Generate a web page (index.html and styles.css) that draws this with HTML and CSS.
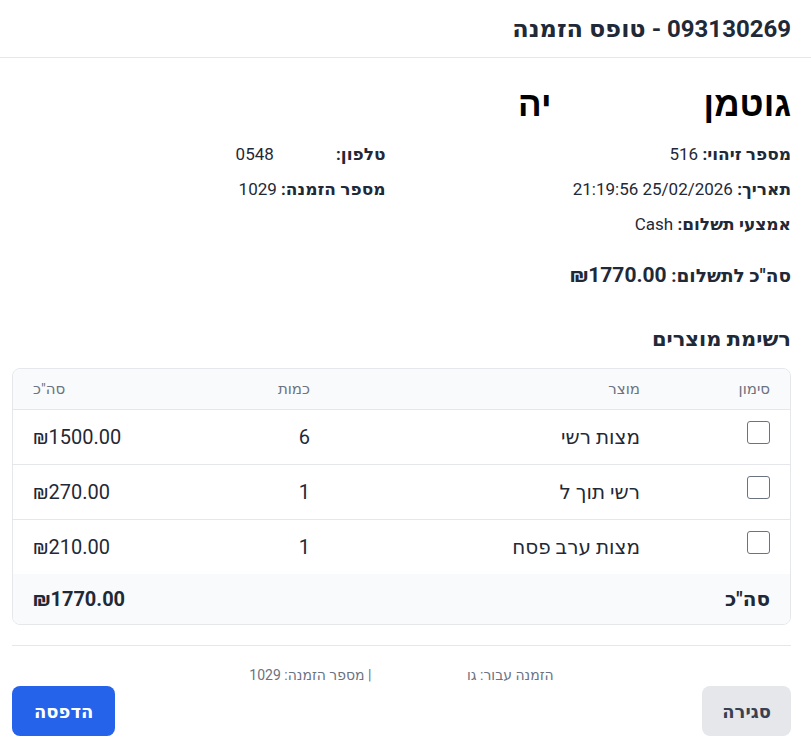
FILE: index.html
```html
<!DOCTYPE html>
<html lang="he" dir="rtl">
<head>
<meta charset="utf-8">
<title>טופס הזמנה</title>
<link rel="stylesheet" href="styles.css">
</head>
<body>
<div class="modal">
  <header class="modal-header">
    <h2 class="modal-title">093130269 - טופס הזמנה</h2>
  </header>
  <main class="modal-body">
    <h1 class="customer-name">גוטמן<span class="redact redact-name"></span>יה</h1>
    <div class="info-grid">
      <div class="info-row"><span class="label">מספר זיהוי:</span> <span class="ltr"><span class="redact redact-id"></span>516</span></div>
      <div class="info-row"><span class="label">טלפון:</span> <span class="ltr">0548<span class="redact redact-phone"></span></span></div>
      <div class="info-row"><span class="label">תאריך:</span> <span class="ltr">21:19:56 25/02/2026</span></div>
      <div class="info-row"><span class="label">מספר הזמנה:</span> 1029</div>
      <div class="info-row"><span class="label">אמצעי תשלום:</span> Cash</div>
    </div>
    <div class="grand-total">סה"כ לתשלום: <span class="amount">₪1770.00</span></div>
    <h3 class="section-title">רשימת מוצרים</h3>
    <div class="table-wrap">
      <table class="items">
        <thead>
          <tr>
            <th class="c-mark">סימון</th>
            <th class="c-prod">מוצר</th>
            <th class="c-qty">כמות</th>
            <th class="c-sum">סה"כ</th>
          </tr>
        </thead>
        <tbody>
          <tr>
            <td class="c-mark"><span class="checkbox"></span></td>
            <td class="c-prod">מצות רשי</td>
            <td class="c-qty">6</td>
            <td class="c-sum">₪1500.00</td>
          </tr>
          <tr>
            <td class="c-mark"><span class="checkbox"></span></td>
            <td class="c-prod">רשי תוך ל</td>
            <td class="c-qty">1</td>
            <td class="c-sum">₪270.00</td>
          </tr>
          <tr>
            <td class="c-mark"><span class="checkbox"></span></td>
            <td class="c-prod">מצות ערב פסח</td>
            <td class="c-qty">1</td>
            <td class="c-sum">₪210.00</td>
          </tr>
        </tbody>
        <tfoot>
          <tr>
            <td class="c-mark">סה"כ</td>
            <td class="c-prod"></td>
            <td class="c-qty"></td>
            <td class="c-sum">₪1770.00</td>
          </tr>
        </tfoot>
      </table>
    </div>
    <hr class="divider">
    <p class="footer-note">הזמנה עבור: גו<span class="redact redact-foot"></span> | מספר הזמנה: 1029</p>
    <div class="actions">
      <button class="btn btn-close" type="button">סגירה</button>
      <button class="btn btn-print" type="button">הדפסה</button>
    </div>
  </main>
</div>
</body>
</html>
```
FILE: styles.css
```css
* { box-sizing: border-box; }
html, body { margin: 0; padding: 0; background: #fff; }
body {
  font-family: Roboto, "Noto Sans", "DejaVu Sans", sans-serif;
  color: #1f2937;
}
.modal { width: 811px; }
.modal-header {
  height: 58px;
  border-bottom: 1px solid #e5e7eb;
  padding: 0 20px 0 12px;
  display: flex;
  align-items: center;
}
.modal-title {
  margin: 0;
  font-size: 24px;
  font-weight: 700;
  color: #1f2937;
}
.modal-body {
  padding: 20px 20px 0 12px;
}
.customer-name {
  margin: 4px 0 0;
  font-family: "Liberation Sans", Arial, sans-serif;
  font-size: 35px;
  font-weight: 700;
  color: #000;
  line-height: 44px;
  display: flex;
  align-items: center;
}
.redact { display: inline-block; background: #fff; }
.redact-name { width: 152px; height: 40px; }
.redact-id { width: 70px; height: 14px; }
.redact-phone { width: 58px; height: 14px; }
.redact-foot { width: 92px; height: 12px; }
.ltr { unicode-bidi: isolate; direction: ltr; }
.info-grid {
  margin-top: 18px;
  display: grid;
  grid-template-columns: 1fr 1fr;
  column-gap: 32px;
  row-gap: 14px;
  font-size: 17px;
  line-height: 21px;
  color: #1f2937;
}
.label { font-weight: 700; }
.grand-total {
  margin-top: 28px;
  font-size: 18.5px;
  font-weight: 700;
  line-height: 24px;
}
.grand-total .amount { font-size: 21px; }
.section-title {
  margin: 38px 0 0;
  font-size: 21px;
  font-weight: 700;
  line-height: 26px;
}
.table-wrap {
  margin-top: 16px;
  border: 1px solid #e5e7eb;
  border-radius: 8px;
  overflow: hidden;
}
.items {
  width: 100%;
  table-layout: fixed;
  border-collapse: collapse;
  font-size: 20px;
  color: #1f2937;
}
.items th {
  background: #f9fafb;
  font-size: 15px;
  font-weight: 400;
  color: #6b7280;
  height: 40px;
  padding: 0 20px;
  text-align: right;
  border-bottom: 1px solid #e5e7eb;
}
.items td {
  height: 55px;
  padding: 0 20px;
  text-align: right;
}
.items tbody tr + tr td { border-top: 1px solid #e5e7eb; }
.c-mark { width: 130px; }
.c-prod { width: 330px; }
.c-qty { width: 160px; }
.items .c-sum { text-align: left; }
.items tfoot td {
  background: #f9fafb;
  height: 50px;
  font-weight: 700;
  font-size: 20px;
}
.checkbox {
  display: block;
  width: 23px;
  height: 23px;
  border: 1.5px solid #6b7280;
  border-radius: 3px;
  margin-top: -8px;
}
.divider {
  margin: 20px 0 0;
  border: 0;
  border-top: 1px solid #e5e7eb;
}
.footer-note {
  margin: 21px 0 0;
  text-align: center;
  font-size: 14px;
  line-height: 17px;
  color: #6b7280;
}
.actions {
  margin-top: 2px;
  display: flex;
  justify-content: space-between;
}
.btn {
  border: 0;
  height: 50px;
  border-radius: 8px;
  font-family: inherit;
  font-size: 18px;
  font-weight: 700;
  padding: 0 20px;
}
.btn-close { background: #e5e7eb; color: #374151; }
.btn-print { background: #2563eb; color: #fff; padding: 0 22px; }
```
